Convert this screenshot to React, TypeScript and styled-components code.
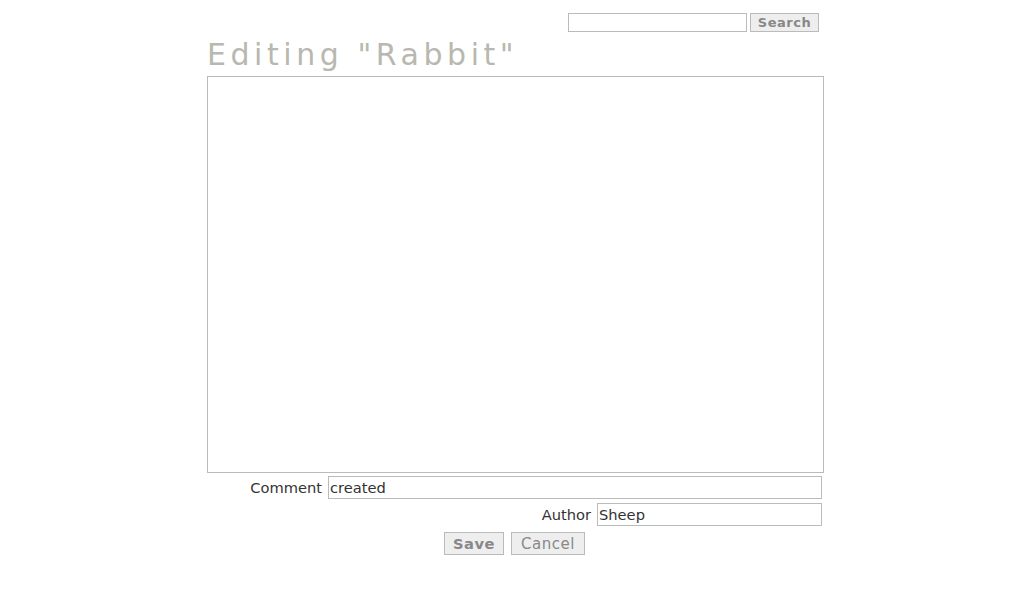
import styled, { createGlobalStyle } from 'styled-components';

const GlobalStyle = createGlobalStyle`
  body {
    margin: 0;
    background: #fff;
    font-family: 'DejaVu Sans', sans-serif;
    color: #333;
  }
`;

const Page = styled.div`
  width: 617px;
  margin-left: 207px;
  padding-top: 13px;
`;

const SearchBar = styled.form`
  display: flex;
  justify-content: flex-end;
  gap: 3px;
  padding-right: 5px;
`;

const SearchInput = styled.input`
  box-sizing: border-box;
  width: 179px;
  height: 19px;
  border: 1px solid #bbb;
  padding: 0 2px;
  font: 13px 'DejaVu Sans', sans-serif;
  outline: none;
`;

const Button = styled.button<{ $bold?: boolean; $w: number; $h: number; $size: number }>`
  box-sizing: border-box;
  width: ${(p) => p.$w}px;
  height: ${(p) => p.$h}px;
  padding: 0;
  border: 1px solid #bbb;
  background: #eee;
  color: #888;
  font-family: 'DejaVu Sans', sans-serif;
  font-size: ${(p) => p.$size}px;
  font-weight: ${(p) => (p.$bold ? 'bold' : 'normal')};
  letter-spacing: 0.5px;
  cursor: pointer;
`;

const Title = styled.h1`
  margin: 6px 0 4px;
  font-family: 'DejaVu Sans', sans-serif;
  font-weight: normal;
  font-size: 30px;
  line-height: 34px;
  letter-spacing: 4.55px;
  color: #b8b8b0;
`;

const Editor = styled.textarea`
  display: block;
  box-sizing: border-box;
  width: 617px;
  height: 397px;
  border: 1px solid #bbb;
  resize: none;
  margin: 0;
  outline: none;
`;

const Field = styled.div`
  display: flex;
  justify-content: flex-end;
  align-items: center;
  gap: 6px;
  padding-right: 2px;
  margin-top: 3px;

  & + & {
    margin-top: 4px;
  }
`;

const Label = styled.label`
  font-size: 14.67px;
  color: #333;
`;

const TextInput = styled.input<{ $w: number }>`
  box-sizing: border-box;
  width: ${(p) => p.$w}px;
  height: 23px;
  border: 1px solid #bbb;
  padding: 0 1px;
  font: 14.67px 'DejaVu Sans', sans-serif;
  color: #333;
  outline: none;
`;

const Actions = styled.div`
  display: flex;
  justify-content: center;
  gap: 7px;
  margin-top: 6px;
  padding-right: 2px;
`;

function App() {
  return (
    <>
      <GlobalStyle />
      <Page>
        <SearchBar onSubmit={(e) => e.preventDefault()}>
          <SearchInput type='text' />
          <Button type='submit' $bold $w={69} $h={19} $size={13}>
            Search
          </Button>
        </SearchBar>
        <Title>Editing "Rabbit"</Title>
        <form onSubmit={(e) => e.preventDefault()}>
          <Editor />
          <Field>
            <Label>Comment</Label>
            <TextInput $w={494} defaultValue='created' />
          </Field>
          <Field>
            <Label>Author</Label>
            <TextInput $w={225} defaultValue='Sheep' />
          </Field>
          <Actions>
            <Button type='submit' $bold $w={60} $h={23} $size={14.67}>
              Save
            </Button>
            <Button type='button' $w={74} $h={23} $size={15}>
              Cancel
            </Button>
          </Actions>
        </form>
      </Page>
    </>
  );
}

export default App;
